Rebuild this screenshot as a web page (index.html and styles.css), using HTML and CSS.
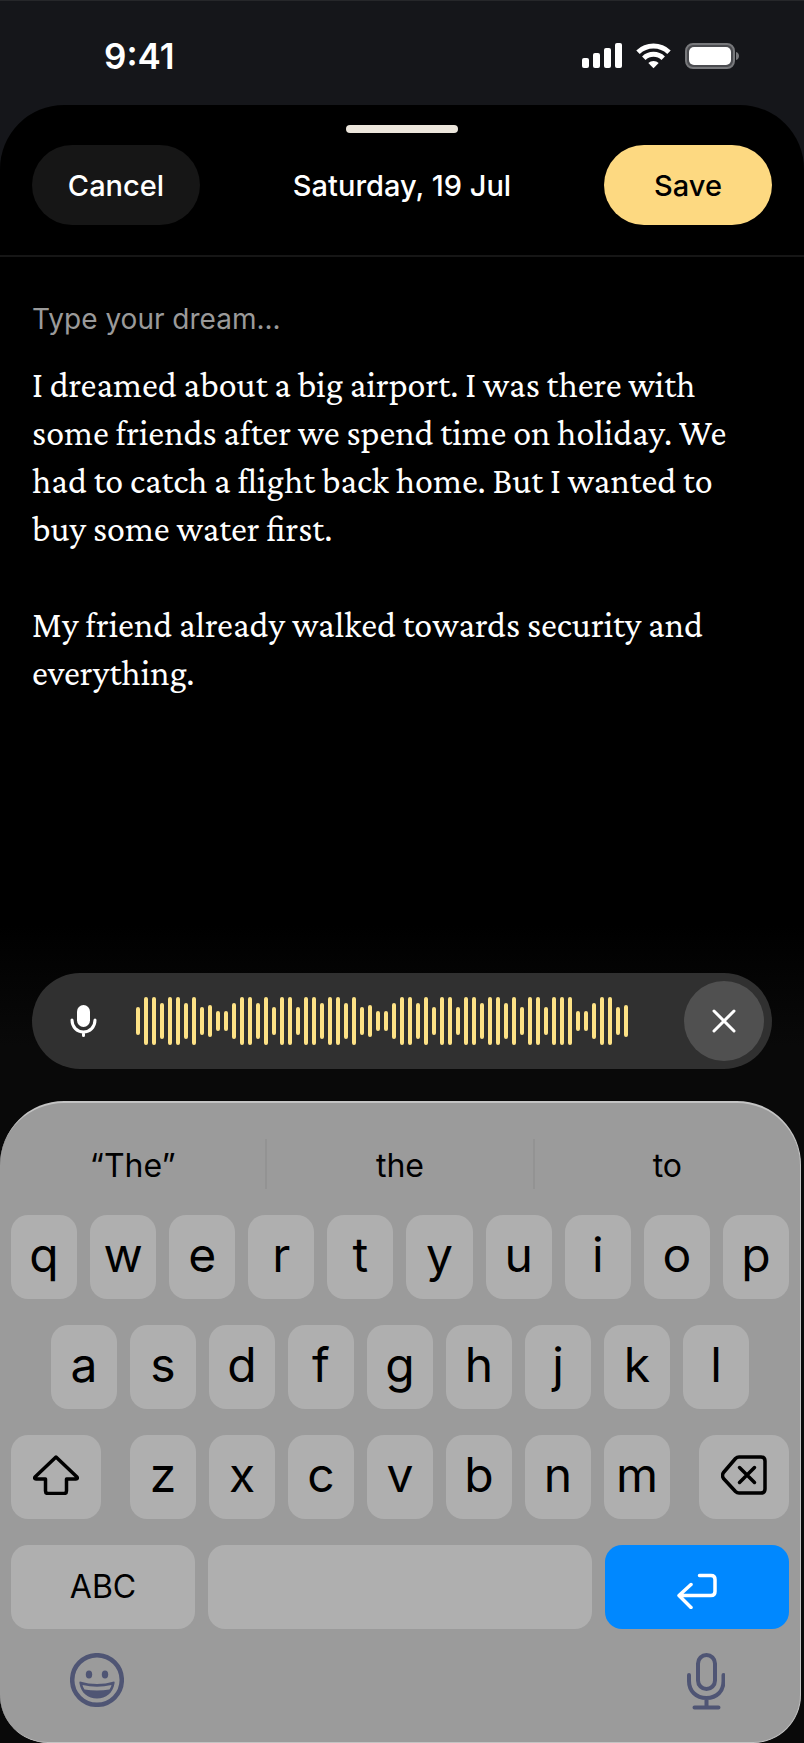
FILE: index.html
```html
<!DOCTYPE html>
<html lang="en">
<head>
    <meta charset="UTF-8">
    <meta name="viewport" content="width=device-width, initial-scale=1.0">
    <title>Dream Journal</title>
    <link rel="stylesheet" href="styles.css">
</head>
<body>
    <div class="screen">
        <header class="status-bar">
            <time class="clock">9:41</time>
            <div class="status-icons">
                <svg width="40" height="26" viewBox="0 0 40 26" fill="#fff" aria-hidden="true">
                    <rect x="0" y="15" width="7" height="10" rx="2"/>
                    <rect x="11" y="10" width="7" height="15" rx="2"/>
                    <rect x="22" y="5" width="7" height="20" rx="2"/>
                    <rect x="33" y="0" width="7" height="25" rx="2"/>
                </svg>
                <svg width="35" height="26" viewBox="0 0 35 26" fill="none" stroke="#fff" stroke-width="5" aria-hidden="true">
                    <path d="M2 9.2a22.5 22.5 0 0 1 31 0"/>
                    <path d="M7.8 15.2a14 14 0 0 1 19.4 0"/>
                    <path d="M17.5 25.3l-5.2-5.3a7.5 7.5 0 0 1 10.4 0z" fill="#fff" stroke="none"/>
                </svg>
                <svg class="battery" width="55" height="26" viewBox="0 0 55 26" aria-hidden="true">
                    <rect x="1" y="1" width="48" height="24" rx="7" fill="#4b4c50" stroke="#77787b" stroke-width="2"/>
                    <rect x="4" y="4" width="42" height="18" rx="5" fill="#fff"/>
                    <path d="M51 9c4 1 4 7 0 8z" fill="#77787b"/>
                </svg>
            </div>
        </header>

        <main class="sheet">
            <div class="grabber"></div>

            <div class="toolbar">
                <button class="pill cancel" type="button">Cancel</button>
                <h1 class="title">Saturday, 19 Jul</h1>
                <button class="pill save" type="button">Save</button>
            </div>

            <div class="editor">
                <label class="hint" for="dream">Type your dream...</label>
                <textarea id="dream" class="dream" spellcheck="false">I dreamed about a big airport. I was there with some friends after we spend time on holiday. We had to catch a flight back home. But I wanted to buy some water first.

My friend already walked towards security and everything.</textarea>
            </div>

            <div class="recorder">
                <svg class="recorder-mic" width="28" height="32" viewBox="0 0 28 32" aria-hidden="true">
                    <rect x="7" y="0" width="13" height="22" rx="6.5" fill="#fff"/>
                    <path d="M2 15c0 7 5 12 11.500 12s11.500-5 11.500-12M13.500 27v3.500" fill="none" stroke="#fff" stroke-width="3" stroke-linecap="round"/>
                </svg>
                <svg class="waveform" width="492" height="48" viewBox="0 0 492 48" aria-hidden="true">
                    <path d="M2 12v24M10 2v44M18 2v44M26 8v32M34 2v44M42 2v44M50 8v32M58 2v44M66 12v24M74 10v28M82 16v16M90 16v16
                        M98 8v32M106 2v44M114 2v44M122 8v32M130 2v44M138 12v24M146 2v44M154 2v44M162 12v24M170 2v44M178 2v44
                        M186 8v32M194 2v44M202 2v44M210 8v32M218 2v44M226 12v24M234 10v28M242 16v16M250 16v16M258 8v32M266 2v44
                        M274 2v44M282 8v32M290 2v44M298 12v24M306 2v44M314 2v44M322 12v24M330 2v44M338 2v44M346 8v32M354 2v44
                        M362 2v44M370 8v32M378 2v44M386 12v24M394 2v44M402 2v44M410 12v24M418 2v44M426 2v44M434 2v44M442 16v16
                        M450 16v16M458 8v32M466 2v44M474 2v44M482 12v24M490 10v28"/>
                </svg>
                <button class="stop" type="button" aria-label="Stop recording">
                    <svg width="24" height="24" viewBox="0 0 24 24" fill="none" stroke="#fff" stroke-width="3" stroke-linecap="round">
                        <path d="M2 2l20 20M22 2L2 22"/>
                    </svg>
                </button>
            </div>

            <div class="keyboard">
                <div class="suggestions">
                    <button type="button">“The”</button>
                    <button type="button">the</button>
                    <button type="button">to</button>
                </div>

                <div class="row">
                    <button class="key" type="button">q</button>
                    <button class="key" type="button">w</button>
                    <button class="key" type="button">e</button>
                    <button class="key" type="button">r</button>
                    <button class="key" type="button">t</button>
                    <button class="key" type="button">y</button>
                    <button class="key" type="button">u</button>
                    <button class="key" type="button">i</button>
                    <button class="key" type="button">o</button>
                    <button class="key" type="button">p</button>
                </div>

                <div class="row row-inset">
                    <button class="key" type="button">a</button>
                    <button class="key" type="button">s</button>
                    <button class="key" type="button">d</button>
                    <button class="key" type="button">f</button>
                    <button class="key" type="button">g</button>
                    <button class="key" type="button">h</button>
                    <button class="key" type="button">j</button>
                    <button class="key" type="button">k</button>
                    <button class="key" type="button">l</button>
                </div>

                <div class="row">
                    <button class="key shift" type="button" aria-label="Shift">
                        <svg width="46" height="40" viewBox="0 0 46 40" fill="none" stroke="#000" stroke-width="3.500" stroke-linejoin="round">
                            <path d="M23 2L2 22q-1 2 1 2h9.500v12q0 2.500 2.500 2.500h16q2.500 0 2.500-2.500V24H43q2 0 1-2z"/>
                        </svg>
                    </button>
                    <button class="key" type="button">z</button>
                    <button class="key" type="button">x</button>
                    <button class="key" type="button">c</button>
                    <button class="key" type="button">v</button>
                    <button class="key" type="button">b</button>
                    <button class="key" type="button">n</button>
                    <button class="key" type="button">m</button>
                    <button class="key delete" type="button" aria-label="Delete">
                        <svg width="46" height="40" viewBox="0 0 46 40" fill="none" stroke="#000" stroke-width="3.500" stroke-linecap="round" stroke-linejoin="round">
                            <path d="M18 2H40q4 0 4 4v28q0 4-4 4H18q-2 0-3.500-1.500l-12-13q-2-3 0-6l12-14Q16 2 18 2z"/>
                            <path d="M18.500 12.500l15 15M33.500 12.500l-15 15"/>
                        </svg>
                    </button>
                </div>

                <div class="row">
                    <button class="key wide" type="button">ABC</button>
                    <button class="key space" type="button" aria-label="Space"></button>
                    <button class="key wide return" type="button" aria-label="Return">
                        <svg width="40" height="36" viewBox="0 0 40 36" fill="none" stroke="#fff" stroke-width="3.500" stroke-linecap="round" stroke-linejoin="round">
                            <path d="M22.500 2.500H34q4 0 4 4v12q0 4-4 4H2M14 11.500L2 22.500l12 12"/>
                        </svg>
                    </button>
                </div>

                <div class="keyboard-footer">
                    <button type="button" aria-label="Emoji">
                        <svg width="54" height="54" viewBox="0 0 54 54" fill="#4f5574">
                            <circle cx="27" cy="27" r="24.800" fill="none" stroke="#4f5574" stroke-width="4.500"/>
                            <ellipse cx="19" cy="21.500" rx="3.200" ry="3.900"/>
                            <ellipse cx="35" cy="21.500" rx="3.200" ry="3.900"/>
                            <path fill-rule="evenodd" d="M10 28.500q17 5 34 0 1 0 .500 2C43 40 36 45.500 27 45.500S11 40 9.500 30.500q-.500-2 .500-2zm2.500 3.500q.500 2.500 2 4.500 12.500 2 25 0 1.500-2 2-4.500-14.500 3.500-29 0z"/>
                        </svg>
                    </button>
                    <button type="button" aria-label="Dictate">
                        <svg width="38" height="58" viewBox="0 0 38 58" fill="none" stroke="#4f5574" stroke-width="4" stroke-linecap="round">
                            <rect x="11" y="2" width="17" height="34" rx="8.500"/>
                            <path d="M2 22v6c0 10 7 17 17.500 17S36.500 38 36.500 28v-6M19.500 45v9M7.500 54.500h24"/>
                        </svg>
                    </button>
                </div>
            </div>
        </main>
    </div>
</body>
</html>
```

FILE: styles.css
```css
* {
    margin: 0;
    padding: 0;
    box-sizing: border-box;
}

body {
    font-family: Inter, 'Liberation Sans', sans-serif;
    background: #15161a;
    color: #fff;
}

button {
    border: none;
    background: none;
    font: inherit;
    color: inherit;
    cursor: pointer;
}

svg {
    display: block;
    flex-shrink: 0;
}

.screen {
    min-height: 100vh;
    display: flex;
    flex-direction: column;
    border-top: 1px solid #26272a;
}

/* Status bar */
.status-bar {
    height: 104px;
    padding: 6px 64px 0 104px;
    display: flex;
    justify-content: space-between;
    align-items: center;
}

.clock {
    font-size: 35px;
    font-weight: 600;
}

.status-icons {
    display: flex;
    align-items: center;
    gap: 14px;
}

/* Sheet */
.sheet {
    flex: 1;
    display: flex;
    flex-direction: column;
    background: linear-gradient(#000 820px, #090909 940px);
    border-radius: 64px 64px 0 0;
    padding-top: 20px;
}

.grabber {
    width: 112px;
    height: 8px;
    margin: 0 auto 12px;
    border-radius: 4px;
    background: #ece6dc;
}

.toolbar {
    display: flex;
    justify-content: space-between;
    align-items: center;
    padding: 0 32px 30px;
    border-bottom: 2px solid #161616;
}

.pill {
    width: 168px;
    height: 80px;
    border-radius: 40px;
    font-size: 29px;
    font-weight: 500;
}

.cancel {
    background: #161616;
}

.save {
    background: #fdd981;
    color: #000;
}

.title {
    font-size: 29px;
    font-weight: 500;
}

.editor {
    flex: 1;
    display: flex;
    flex-direction: column;
    padding: 44px 32px 24px;
}

.hint {
    font-size: 28px;
    line-height: 36px;
    color: #9a9a9a;
    margin-bottom: 24px;
}

.dream {
    flex: 1;
    width: 100%;
    border: none;
    outline: none;
    resize: none;
    background: none;
    color: #fff;
    font-family: 'Crimson Pro', 'Liberation Serif', serif;
    font-size: 36px;
    line-height: 48px;
}

/* Voice recorder */
.recorder {
    height: 96px;
    margin: 0 32px 32px;
    padding: 0 8px 0 38px;
    border-radius: 48px;
    background: #303030;
    display: flex;
    align-items: center;
}

.waveform {
    margin-left: 38px;
    fill: none;
    stroke: #fde286;
    stroke-width: 4;
    stroke-linecap: round;
}

.stop {
    width: 80px;
    height: 80px;
    margin-left: auto;
    border-radius: 50%;
    background: #505050;
    display: flex;
    align-items: center;
    justify-content: center;
}

/* Keyboard */
.keyboard {
    margin-right: 3px;
    padding: 36px 11px 31px;
    border: 1px solid #c4c4c4;
    border-width: 2px 1px 1px 0;
    border-radius: 64px 64px 48px 48px;
    background: #9b9b9b;
    color: #000;
    display: flex;
    flex-direction: column;
    gap: 26px;
}

.suggestions {
    display: flex;
    margin: 0 -11px;
}

.suggestions button {
    flex: 1;
    height: 50px;
    padding-top: 2px;
    font-size: 32px;
}

.suggestions button + button {
    border-left: 2px solid #939393;
}

.row {
    display: flex;
    gap: 13px;
}

.row-inset {
    padding: 0 40px;
}

.key {
    flex: 1;
    min-width: 0;
    height: 84px;
    padding-bottom: 4px;
    border-radius: 17px;
    background: #afafaf;
    font-size: 48px;
    line-height: 56px;
    display: flex;
    align-items: center;
    justify-content: center;
}

.shift,
.delete {
    flex: 0 0 90px;
}

.shift {
    margin-right: 16px;
}

.delete {
    margin-left: 16px;
}

.wide {
    flex: 0 0 184px;
    padding-bottom: 0;
    font-size: 32px;
}

.return {
    background: #0088ff;
    padding-top: 8px;
}

.keyboard-footer {
    display: flex;
    justify-content: space-between;
    align-items: flex-start;
    padding: 0 64px 0 59px;
    margin-top: -2px;
}
```
